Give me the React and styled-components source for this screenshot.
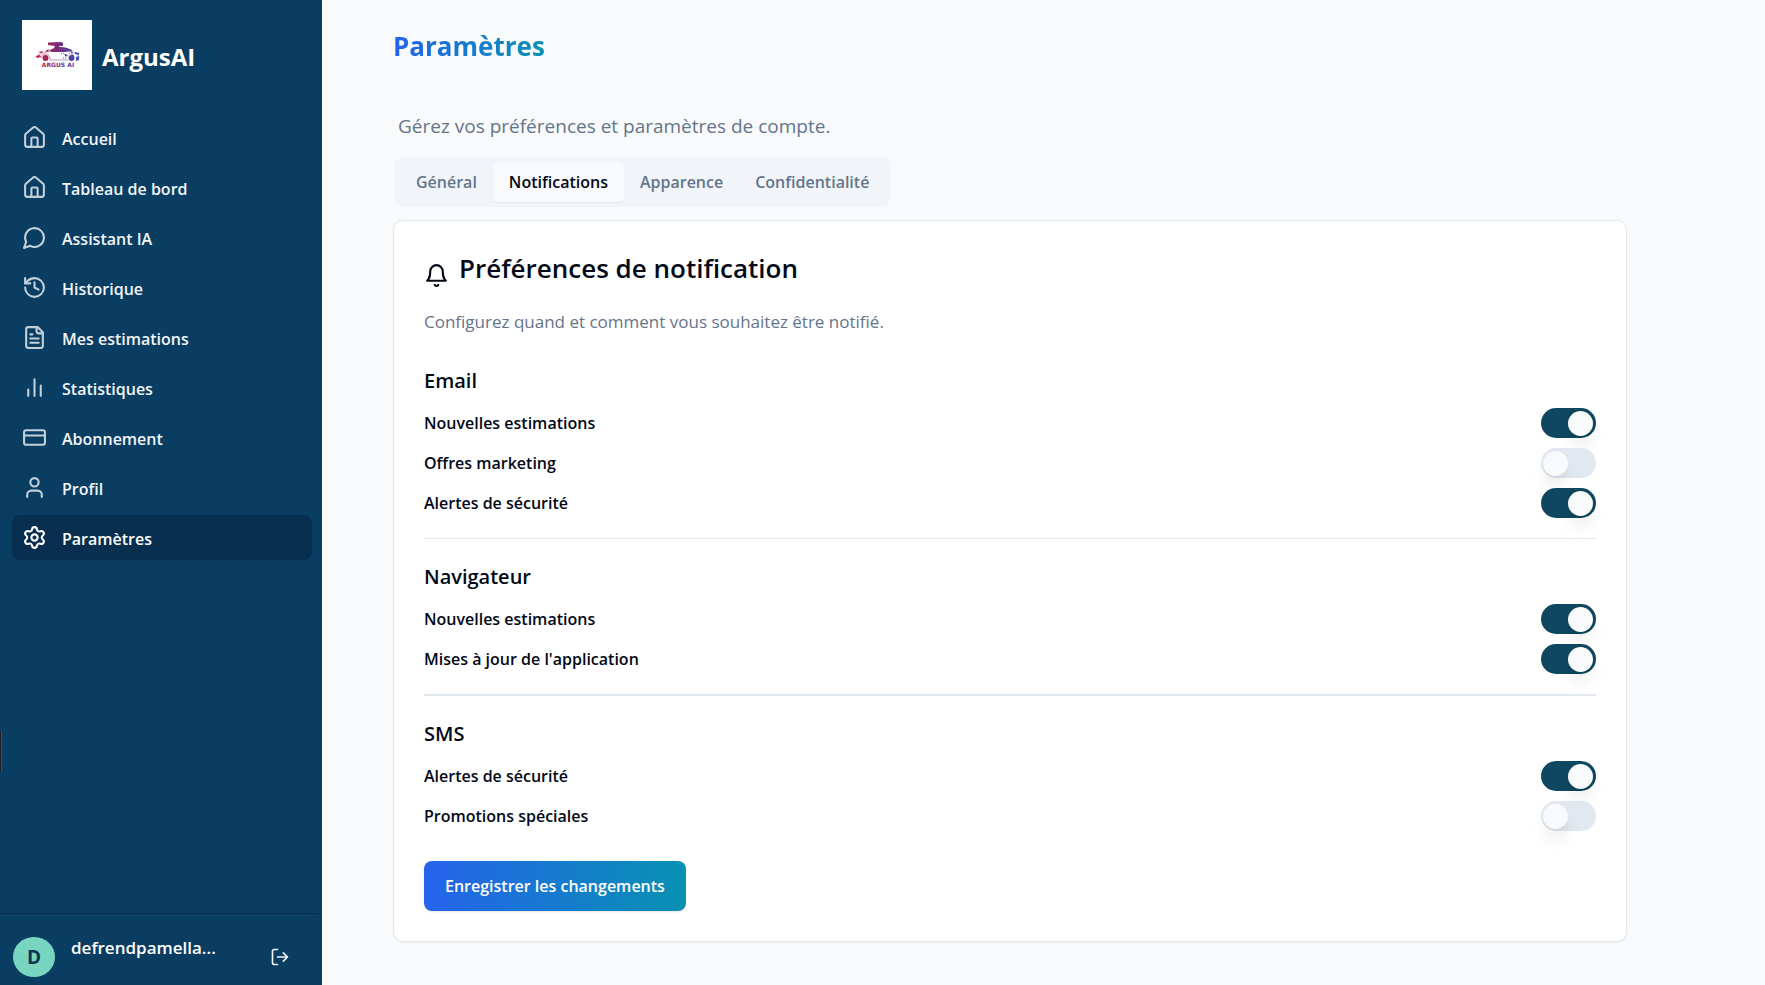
import React, { useState } from "react";
import styled, { createGlobalStyle, css } from "styled-components";
import { Settings } from "lucide-react";

const GlobalStyle = createGlobalStyle`
  *, *::before, *::after { box-sizing: border-box; }
  body {
    margin: 0;
    background: #f8fafc;
    color: #020817;
    font-family: "Open Sans", "Noto Sans", sans-serif;
    font-size: 16px;
  }
  h1, h2, h3, p { margin: 0; }
  button, input { font: inherit; }
`;

const Shell = styled.div`
  position: relative;
  display: flex;
  min-height: 100vh;
`;

const EdgeHandle = styled.span`
  position: absolute;
  left: 0;
  bottom: 214px;
  width: 2px;
  height: 40px;
  background: #1f1f1f;
  border-right: 1px solid #4a4a52;
`;

const Sidebar = styled.aside`
  flex: 0 0 322px;
  display: flex;
  flex-direction: column;
  background: #0a3d62;
  color: #f8fafc;
`;

const Brand = styled.a`
  display: flex;
  align-items: center;
  gap: 10px;
  padding: 20px 22px;
  color: #fff;
  font-size: 24px;
  font-weight: 700;
  line-height: 32px;
  text-decoration: none;
`;

const BrandName = styled.span`
  padding-top: 4px;
`;

const Logo = styled.svg`
  width: 70px;
  height: 70px;
  background: #fff;
`;

const Nav = styled.nav`
  flex: 1;
  display: flex;
  flex-direction: column;
  gap: 5px;
  padding: 5px 10px 0 12px;
`;

const NavLink = styled.a`
  display: flex;
  align-items: center;
  gap: 15px;
  height: 45px;
  padding: 0 10px;
  border-radius: 8px;
  color: #f1f5f9;
  font-size: 16px;
  font-weight: 600;
  text-decoration: none;
  svg { opacity: 0.8; }
  ${(p) => p.$active && css`
    background: #082f4f;
    color: #fff;
    svg { opacity: 1; }
  `}
`;

const NavLabel = styled.span`
  padding-top: 2px;
`;

const Account = styled.div`
  display: flex;
  align-items: center;
  gap: 16px;
  margin-right: 4px;
  padding: 23px 20px 8px 13px;
  border-top: 1px solid #082f4f;
`;

const Avatar = styled.span`
  display: grid;
  place-items: center;
  width: 42px;
  height: 40px;
  border-radius: 50%;
  background: #78d6c0;
  color: #0a3454;
  font-size: 19px;
  font-weight: 700;
`;

const UserName = styled.span`
  flex: 1;
  align-self: flex-start;
  color: #fff;
  font-size: 17px;
  font-weight: 600;
  line-height: 22px;
`;

const LogoutButton = styled.button`
  display: grid;
  place-items: center;
  width: 36px;
  height: 40px;
  padding: 0;
  border: 0;
  background: none;
  color: #f1f5f9;
  cursor: pointer;
`;

const Main = styled.main`
  flex: 1;
  min-width: 0;
  padding: 26px 138px 42px 71px;
`;

const PageTitle = styled.h1`
  width: fit-content;
  background: linear-gradient(to right, #2563eb, #0891b2);
  background-clip: text;
  color: transparent;
  font-size: 26px;
  font-weight: 700;
  line-height: 40px;
`;

const Intro = styled.p`
  margin: 45px 0 0 5px;
  color: #64748b;
  font-size: 19px;
  line-height: 30px;
`;

const TabList = styled.div`
  display: flex;
  width: fit-content;
  margin: 16px 0 13px 2px;
  padding: 5px;
  border-radius: 8px;
  background: #f1f5f9;
`;

const Tab = styled.button`
  height: 40px;
  padding: 0 16px;
  border: 0;
  border-radius: 5px;
  background: transparent;
  color: #64748b;
  font-size: 16px;
  font-weight: 600;
  cursor: pointer;
  ${(p) => p.$active && css`
    background: #f8fafc;
    color: #020817;
    box-shadow: 0 1px 2px rgba(0, 0, 0, 0.06);
  `}
`;

const Card = styled.section`
  padding: 30px;
  border: 1px solid #e2e8f0;
  border-radius: 10px;
  background: #fff;
  box-shadow: 0 1px 2px rgba(0, 0, 0, 0.05);
`;

const CardTitle = styled.h2`
  display: flex;
  align-items: flex-start;
  gap: 10px;
  font-size: 26px;
  font-weight: 600;
  line-height: 34px;
  svg { margin-top: 12px; }
`;

const CardText = styled.p`
  margin-top: 21px;
  color: #64748b;
  font-size: 17px;
  line-height: 25px;
`;

const Groups = styled.form`
  margin-top: 30px;
`;

const Group = styled.fieldset`
  min-width: 0;
  margin: 0;
  padding: 0 0 20px;
  border: 0;
  & + & {
    padding-top: 21px;
    border-top: 1px solid #e2e8f0;
  }
  & + &:last-of-type {
    border-top-width: 2px;
  }
`;

const GroupTitle = styled.legend`
  float: left;
  width: 100%;
  padding: 0;
  margin-bottom: 10px;
  font-size: 20px;
  font-weight: 600;
  line-height: 34px;
`;

const Row = styled.div`
  clear: both;
  display: flex;
  align-items: center;
  justify-content: space-between;
  height: 30px;
  & + & { margin-top: 10px; }
`;

const RowLabel = styled.label`
  font-size: 16px;
  font-weight: 600;
`;

const Switch = styled.input`
  appearance: none;
  display: flex;
  align-items: center;
  width: 55px;
  height: 30px;
  margin: 0;
  padding: 0 3px 0 2px;
  border-radius: 15px;
  background: #e2e8f0;
  cursor: pointer;
  &::before {
    content: "";
    width: 25px;
    height: 25px;
    border-radius: 50%;
    background: #f8fafc;
    box-shadow: 0 12px 18px -3px rgba(0, 0, 0, 0.1), 0 4px 7px -4px rgba(0, 0, 0, 0.1);
  }
  &:checked {
    justify-content: flex-end;
    background: #0e475f;
  }
`;

const SaveButton = styled.button`
  display: block;
  height: 50px;
  margin-top: 10px;
  padding: 0 21px;
  border: 0;
  border-radius: 8px;
  background: linear-gradient(to right, #2563eb, #0891b2);
  color: #fff;
  font-size: 16px;
  font-weight: 600;
  box-shadow: 0 1px 2px rgba(0, 0, 0, 0.1);
  cursor: pointer;
`;

function Icon({ size = 25, children }) {
  return (
    <svg width={size} height={size} viewBox="0 0 24 24" fill="none" stroke="currentColor"
      strokeWidth="2" strokeLinecap="round" strokeLinejoin="round" aria-hidden="true">
      {children}
    </svg>
  );
}

const house = (
  <Icon>
    <path d="M15 21v-8a1 1 0 0 0-1-1h-4a1 1 0 0 0-1 1v8" />
    <path d="M3 10a2 2 0 0 1 .709-1.528l7-5.999a2 2 0 0 1 2.582 0l7 5.999A2 2 0 0 1 21 10v9a2 2 0 0 1-2 2H5a2 2 0 0 1-2-2z" />
  </Icon>
);

const navItems = [
  { label: "Accueil", icon: house },
  { label: "Tableau de bord", icon: house },
  { label: "Assistant IA", icon: <Icon><path d="M7.9 20A9 9 0 1 0 4 16.1L2 22Z" /></Icon> },
  {
    label: "Historique",
    icon: <Icon><path d="M3 12a9 9 0 1 0 9-9 9.75 9.75 0 0 0-6.74 2.74L3 8" /><path d="M3 3v5h5" /><path d="M12 7v5l4 2" /></Icon>,
  },
  {
    label: "Mes estimations",
    icon: (
      <Icon>
        <path d="M15 2H6a2 2 0 0 0-2 2v16a2 2 0 0 0 2 2h12a2 2 0 0 0 2-2V7Z" />
        <path d="M14 2v4a2 2 0 0 0 2 2h4" />
        <path d="M10 9H8M16 13H8M16 17H8" />
      </Icon>
    ),
  },
  { label: "Statistiques", icon: <Icon><path d="M18 20V10M12 20V4M6 20v-6" /></Icon> },
  { label: "Abonnement", icon: <Icon><rect width="20" height="14" x="2" y="5" rx="2" /><path d="M2 10h20" /></Icon> },
  { label: "Profil", icon: <Icon><path d="M19 21v-2a4 4 0 0 0-4-4H9a4 4 0 0 0-4 4v2" /><circle cx="12" cy="7" r="4" /></Icon> },
  { label: "Paramètres", active: true, icon: <Settings size={25} aria-hidden="true" /> },
];

const tabs = ["Général", "Notifications", "Apparence", "Confidentialité"];

const groups = [
  { title: "Email", rows: [["Nouvelles estimations", true], ["Offres marketing", false], ["Alertes de sécurité", true]] },
  { title: "Navigateur", rows: [["Nouvelles estimations", true], ["Mises à jour de l'application", true]] },
  { title: "SMS", rows: [["Alertes de sécurité", true], ["Promotions spéciales", false]] },
];

function ArgusLogo() {
  return (
    <Logo viewBox="0 0 70 70" aria-hidden="true">
      <defs>
        <linearGradient id="argus" gradientUnits="userSpaceOnUse" x1="13" y1="0" x2="57" y2="0">
          <stop offset="0" stopColor="#cf1c3c" />
          <stop offset="0.5" stopColor="#7d2a78" />
          <stop offset="1" stopColor="#3d4fc0" />
        </linearGradient>
      </defs>
      <g fill="url(#argus)">
        <path d="M26 22.500L39 22l2 1v3h-4l1 2h-6l1-2-7-1z" />
        <path d="M27 31q5-4 11-4 8 0 13 4l-8 1H30z" />
        <path d="M14 36l4-1 1 2-4 1zM16 32l5-1-1 2zM23 31l4-2-1 3zM48 31l3 1-1 2zM53 32l4 1v2l-4-1zM54 37l3-1v4l-3 1zM42 34l4 1-2 2zM49 34l3 1-1 2z" />
        <circle cx="23.500" cy="38" r="3" />
        <circle cx="49.500" cy="38" r="3" />
      </g>
      <g fill="none" stroke="url(#argus)">
        <path d="M14 38q1-4 7-5l7-2M27 40h19M51 32q5 1 6 5l-1 3M19 38a4.500 4.500 0 0 1 9 1" opacity="0.5" />
        <path d="M39 34l3-1M41 38h4M43 35l2-1M47 33l2 1" strokeDasharray="1 1" />
      </g>
      <text x="36" y="47" textAnchor="middle" fill="url(#argus)" fontFamily="DejaVu Sans, sans-serif" fontSize="6" fontWeight="700">ARGUS AI</text>
    </Logo>
  );
}

export default function App() {
  const [tab, setTab] = useState("Notifications");
  return (
    <>
      <GlobalStyle />
      <Shell>
        <Sidebar>
          <Brand href="#accueil"><ArgusLogo /><BrandName>ArgusAI</BrandName></Brand>
          <Nav aria-label="Navigation principale">
            {navItems.map((item) => (
              <NavLink key={item.label} href="#" $active={item.active} aria-current={item.active ? "page" : undefined}>
                {item.icon}
                <NavLabel>{item.label}</NavLabel>
              </NavLink>
            ))}
          </Nav>
          <Account>
            <Avatar>D</Avatar>
            <UserName>defrendpamella...</UserName>
            <LogoutButton type="button" aria-label="Se déconnecter">
              <Icon size={20}>
                <path d="M9 21H5a2 2 0 0 1-2-2V5a2 2 0 0 1 2-2h4" />
                <path d="m16 17 5-5-5-5M21 12H9" />
              </Icon>
            </LogoutButton>
          </Account>
        </Sidebar>
        <EdgeHandle />
        <Main>
          <PageTitle>Paramètres</PageTitle>
          <Intro>Gérez vos préférences et paramètres de compte.</Intro>
          <TabList role="tablist">
            {tabs.map((name) => (
              <Tab key={name} type="button" role="tab" aria-selected={tab === name} $active={tab === name} onClick={() => setTab(name)}>
                {name}
              </Tab>
            ))}
          </TabList>
          <Card>
            <CardTitle>
              <Icon><path d="M6 8a6 6 0 0 1 12 0c0 7 3 9 3 9H3s3-2 3-9" /><path d="M10.300 21a1.940 1.940 0 0 0 3.400 0" /></Icon>
              Préférences de notification
            </CardTitle>
            <CardText>Configurez quand et comment vous souhaitez être notifié.</CardText>
            <Groups onSubmit={(e) => e.preventDefault()}>
              {groups.map((group) => (
                <Group key={group.title}>
                  <GroupTitle>{group.title}</GroupTitle>
                  {group.rows.map(([label, on]) => {
                    const id = `${group.title}-${label}`.replace(/\W+/g, "-");
                    return (
                      <Row key={label}>
                        <RowLabel htmlFor={id}>{label}</RowLabel>
                        <Switch id={id} type="checkbox" role="switch" defaultChecked={on} />
                      </Row>
                    );
                  })}
                </Group>
              ))}
              <SaveButton type="submit">Enregistrer les changements</SaveButton>
            </Groups>
          </Card>
        </Main>
      </Shell>
    </>
  );
}
